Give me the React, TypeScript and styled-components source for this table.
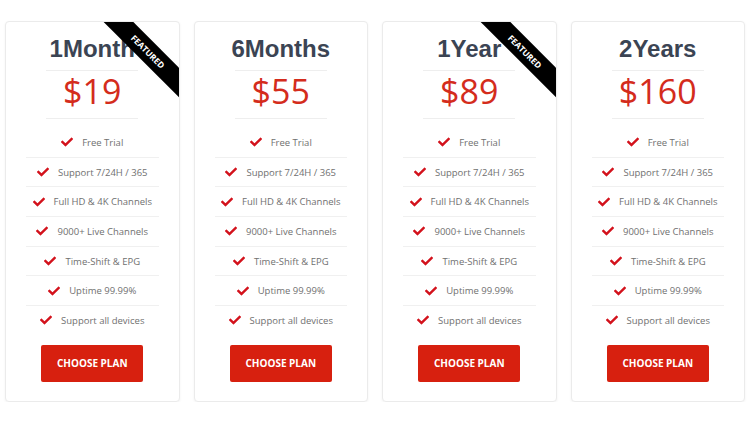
import React from "react";
import styled, { createGlobalStyle } from "styled-components";
import { FaCheck } from "react-icons/fa";

const plans = [
  { name: "1Month", price: "$19", featured: true },
  { name: "6Months", price: "$55", featured: false },
  { name: "1Year", price: "$89", featured: true },
  { name: "2Years", price: "$160", featured: false },
];

const features = [
  "Free Trial",
  "Support 7/24H / 365",
  "Full HD & 4K Channels",
  "9000+ Live Channels",
  "Time-Shift & EPG",
  "Uptime 99.99%",
  "Support all devices",
];

export default function App() {
  return (
    <>
      <GlobalStyle />
      <PricingGrid>
        {plans.map(({ name, price, featured }) => (
          <Card key={name}>
            {featured && <Ribbon>FEATURED</Ribbon>}
            <Title>{name}</Title>
            <Divider />
            <Price>{price}</Price>
            <Divider />
            <FeatureList>
              {features.map((f) => (
                <Feature key={f}>
                  <FaCheck size={12} color="#d3121c" />
                  <span>{f}</span>
                </Feature>
              ))}
            </FeatureList>
            <ChooseButton>CHOOSE PLAN</ChooseButton>
          </Card>
        ))}
      </PricingGrid>
    </>
  );
}

const GlobalStyle = createGlobalStyle`
  body {
    margin: 0;
    background: #fff;
    font-family: "Open Sans", "Liberation Sans", sans-serif;
  }
`;

const PricingGrid = styled.div`
  display: grid;
  grid-template-columns: repeat(4, 1fr);
  gap: 14px;
  padding: 20.5px 5px 0;
`;

const Card = styled.div`
  position: relative;
  overflow: hidden;
  display: flex;
  flex-direction: column;
  align-items: center;
  background: #fff;
  border: 1px solid #ebebeb;
  border-radius: 4px;
  box-shadow: 0 1px 3px rgba(0, 0, 0, 0.05);
  padding: 13.5px 0 19px;
`;

const Ribbon = styled.div`
  position: absolute;
  left: 72px;
  top: 19px;
  width: 140px;
  height: 21px;
  line-height: 21px;
  background: #000;
  color: #fff;
  font-family: "Open Sans", sans-serif;
  font-weight: 700;
  font-size: 8.5px;
  text-align: center;
  transform: rotate(45deg);
`;

const Title = styled.h2`
  margin: 0;
  font-family: "Liberation Sans", Arial, sans-serif;
  font-weight: 700;
  font-size: 24px;
  line-height: 28px;
  color: #3b4453;
  white-space: nowrap;
`;

const Divider = styled.div`
  width: 92px;
  height: 1px;
  background: #eeeeee;
  margin-top: 7px;
`;

const Price = styled.div`
  font-family: "Open Sans", sans-serif;
  font-size: 34px;
  line-height: 40px;
  color: #d42c1c;
`;

const FeatureList = styled.ul`
  list-style: none;
  margin: 9px 0 0;
  padding: 0;
  width: calc(100% - 40px);
`;

const Feature = styled.li`
  display: flex;
  align-items: center;
  justify-content: center;
  gap: 9px;
  height: 28.7px;
  border-bottom: 1px solid #f0f0f0;
  font-size: 9.5px;
  color: #707070;

  &:last-child {
    border-bottom: none;
  }
`;

const ChooseButton = styled.button`
  margin-top: 10px;
  width: 102px;
  height: 37px;
  border: none;
  border-radius: 2px;
  background: #d7200f;
  color: #fff;
  font-family: "Open Sans", sans-serif;
  font-weight: 700;
  font-size: 10px;
  cursor: pointer;
`;
